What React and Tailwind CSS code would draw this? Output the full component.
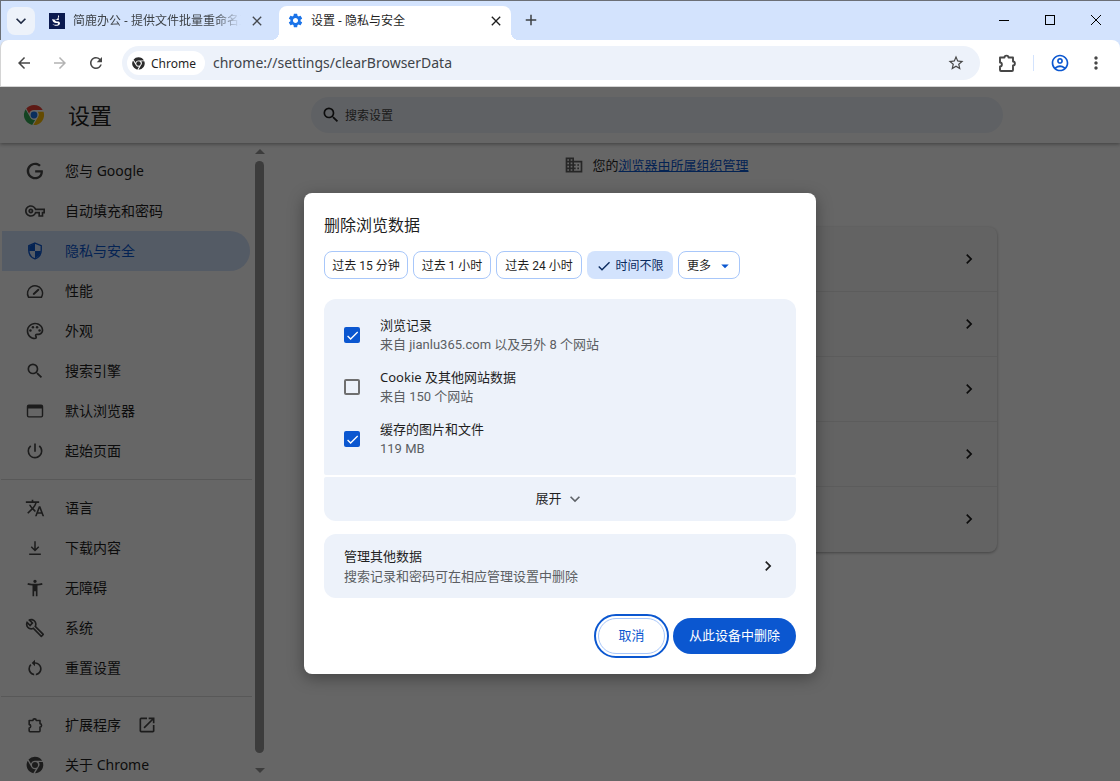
import React from "react";
import {
  MdAdd,
  MdArrowBack,
  MdArrowDropDown,
  MdArrowForward,
  MdCheck,
  MdChevronRight,
  MdClose,
  MdDomain,
  MdKeyboardArrowDown,
  MdMoreVert,
  MdOpenInNew,
  MdOutlineAccountCircle,
  MdOutlineBuild,
  MdOutlinePalette,
  MdOutlineVpnKey,
  MdPowerSettingsNew,
  MdRefresh,
  MdRestartAlt,
  MdSearch,
  MdSettings,
  MdStarBorder,
  MdTranslate,
  MdAccessibilityNew,
} from "react-icons/md";

const GoogleIcon = (props) => (
  <svg viewBox="0 0 24 24" fill="currentColor" {...props}>
    <path d="M21.35 11.1h-9.17v2.73h6.51c-.33 3.81-3.5 5.44-6.5 5.44C8.36 19.27 5 16.25 5 12c0-4.1 3.2-7.27 7.2-7.27 3.09 0 4.9 1.97 4.9 1.97L19 4.72S16.56 2 12.1 2C6.42 2 2.03 6.8 2.03 12c0 5.05 4.13 10 10.22 10 5.35 0 9.25-3.67 9.25-9.09 0-1.15-.15-1.81-.15-1.81z" />
  </svg>
);

const ShieldIcon = (props) => (
  <svg viewBox="0 0 24 24" fill="none" {...props}>
    <path d="M12 2.500l7.500 3v5.600c0 4.800-3.200 8.900-7.500 10.400-4.300-1.500-7.500-5.600-7.500-10.400V5.500z" stroke="currentColor" strokeWidth="1.600" />
    <path d="M12 3v9H5V6zM12 12h7c-.4 4-3.200 7.400-7 8.800z" fill="currentColor" />
  </svg>
);

const GaugeIcon = (props) => (
  <svg viewBox="0 0 24 24" fill="none" stroke="currentColor" strokeWidth="1.800" {...props}>
    <path d="M4.300 19.500a9 9 0 0 1 15.400-9.400 9 9 0 0 1 0 9.400z" strokeLinejoin="round" />
    <path d="M10.500 15.500l5.500-5" strokeLinecap="round" strokeWidth="2.400" />
  </svg>
);

const WindowIcon = (props) => (
  <svg viewBox="0 0 24 24" fill="none" stroke="currentColor" {...props}>
    <rect x="3" y="5" width="18" height="14" rx="1.500" strokeWidth="1.700" />
    <path d="M3 7.500h18" strokeWidth="3" />
  </svg>
);

const DownloadIcon = (props) => (
  <svg viewBox="0 0 24 24" fill="none" stroke="currentColor" strokeWidth="1.800" {...props}>
    <path d="M12 4v11M7.500 10.500L12 15l4.500-4.500M5 19.500h14" />
  </svg>
);

const ExtensionIcon = (props) => (
  <svg viewBox="0 0 24 24" fill="none" stroke="currentColor" strokeWidth="1.900" strokeLinejoin="round" {...props}>
    <path d="M5 6.500h4.500c0-2.500 4-2.500 4 0H18v4c2.500 0 2.500 4 0 4V19a1 1 0 0 1-1 1H6a1 1 0 0 1-1-1v-3.500c2.500 0 2.500-4 0-4z" />
  </svg>
);

// dark centre logo, same drawing for the chip and the sidebar
const ChromeMono = (props) => (
  <svg viewBox="0 0 24 24" fill="currentColor" {...props}>
    <path d="M12 2a10 10 0 0 1 8.660 5H12a5 5 0 0 0-4.800 3.600L4.200 5.400A10 10 0 0 1 12 2z" />
    <path d="M3.300 7l4.400 7.600a5 5 0 0 0 5.300 2.300l-3 5A10 10 0 0 1 3.300 7z" />
    <path d="M21.300 8.500a10 10 0 0 1-9.300 13.500l4.300-7.500a5 5 0 0 0 .1-6z" />
    <circle cx="12" cy="12" r="3.600" />
  </svg>
);

const ChromeColor = (props) => (
  <svg viewBox="0 0 24 24" {...props}>
    <path d="M12 1a11 11 0 0 1 9.530 5.500H12a5.500 5.500 0 0 0-5.300 4L3.600 4.900A11 11 0 0 1 12 1z" fill="#ea4335" />
    <path d="M2.900 5.800l4.800 8.400a5.500 5.500 0 0 0 5.500 3.200L10 22.800A11 11 0 0 1 2.900 5.800z" fill="#34a853" />
    <path d="M22.400 8.500A11 11 0 0 1 11.300 23l4.800-8.300a5.500 5.500 0 0 0 .1-6.200z" fill="#fbbc04" />
    <circle cx="12" cy="12" r="4.600" fill="#fff" />
    <circle cx="12" cy="12" r="3.700" fill="#1a73e8" />
  </svg>
);

const Favicon = () => (
  <svg viewBox="0 0 16 16" className="w-4 h-4 shrink-0">
    <rect width="16" height="16" fill="#0b1a4f" />
    <path d="M9 2c1.500.8 1.500 2.200.2 3 1 .6 1 1.400.3 2-1.500.2-2.700 0-4-.8.300 1.500 1.500 2.300 3.500 2.300 2.300 0 2.800 2.600.7 3.800-2 1-5 .6-6.300-1.300 2 1 4.500 1.200 5.600.2.600-.8-.5-1.300-2-1.300-2 0-3.700-1.500-3.800-4C4.500 6.400 6.700 7 8 6.300 8.800 5.500 9.400 3.800 9 2z" fill="#fff" />
  </svg>
);

const menuTop = [
  { label: "您与 Google", icon: GoogleIcon },
  { label: "自动填充和密码", icon: MdOutlineVpnKey },
  { label: "隐私与安全", icon: ShieldIcon, active: true },
  { label: "性能", icon: GaugeIcon },
  { label: "外观", icon: MdOutlinePalette },
  { label: "搜索引擎", icon: MdSearch },
  { label: "默认浏览器", icon: WindowIcon },
  { label: "起始页面", icon: MdPowerSettingsNew },
];

const menuMiddle = [
  { label: "语言", icon: MdTranslate },
  { label: "下载内容", icon: DownloadIcon },
  { label: "无障碍", icon: MdAccessibilityNew },
  { label: "系统", icon: MdOutlineBuild },
  { label: "重置设置", icon: MdRestartAlt },
];

const ranges = [
  { label: "过去 15 分钟", width: "w-[84px]" },
  { label: "过去 1 小时", width: "w-[78px]" },
  { label: "过去 24 小时", width: "w-[86px]" },
];

const dataRows = [
  { title: "浏览记录", sub: "来自 jianlu365.com 以及另外 8 个网站", checked: true },
  { title: "Cookie 及其他网站数据", sub: "来自 150 个网站", checked: false },
  { title: "缓存的图片和文件", sub: "119 MB", checked: true },
];

const MenuItem = ({ item, children }) => {
  const Icon = item.icon;
  return (
    <div
      className={`ml-[2px] w-[248px] h-10 shrink-0 flex items-center rounded-r-full ${
        item.active ? "bg-[#d3e3fd] text-[#0b57d0]" : "text-[#1f1f1f]"
      }`}
    >
      <Icon className={`w-5 h-5 ml-[23px] shrink-0 ${item.active ? "" : "text-[#474747]"}`} />
      <span className="ml-[20px] text-[14px] leading-5">{item.label}</span>
      {children}
    </div>
  );
};

const Checkbox = ({ checked }) =>
  checked ? (
    <div className="w-4 h-4 rounded-[2px] bg-[#0b57d0] flex items-center justify-center shrink-0">
      <MdCheck className="w-[15px] h-[15px] text-white" />
    </div>
  ) : (
    <div className="w-4 h-4 rounded-[2px] border-2 border-[#6f6f6f] shrink-0" />
  );

const Dialog = () => (
  <div className="w-[512px] h-[481px] bg-white rounded-lg p-5 shadow-[0_4px_16px_rgba(0,0,0,0.35)] text-[#1f1f1f]">
    <div className="text-[16px] leading-6">删除浏览数据</div>

    <div className="flex gap-[5px] mt-[14px]">
      {ranges.map((range) => (
        <div
          key={range.label}
          className={`${range.width} h-7 pt-px flex items-center justify-center border border-[#a8c7fa] rounded-lg text-[12px] whitespace-nowrap font-['Roboto','Noto_Sans_CJK_SC',sans-serif]`}
        >
          {range.label}
        </div>
      ))}
      <div className="h-7 w-[86px] pt-px flex items-center justify-center gap-[3px] bg-[#d3e3fd] rounded-lg text-[12px] text-[#0a2a5e]">
        <MdCheck className="w-4 h-4" />
        时间不限
      </div>
      <div className="h-7 w-[62px] pl-2 pt-px flex items-center border border-[#a8c7fa] rounded-lg text-[12px]">
        更多
        <MdArrowDropDown className="w-[18px] h-[18px] ml-[5px] text-[#0b57d0]" />
      </div>
    </div>

    <div className="mt-5 h-[176px] bg-[#edf2fa] rounded-t-xl rounded-b-[2px] pt-4 pl-5 flex flex-col gap-3">
      {dataRows.map((row) => (
        <div key={row.title} className="flex items-center h-10">
          <Checkbox checked={row.checked} />
          <div className="ml-5">
            <div className="text-[13px] leading-5">{row.title}</div>
            <div className="text-[13px] leading-5 text-[#5b5e62] font-['Roboto','Noto_Sans_CJK_SC',sans-serif]">
              {row.sub}
            </div>
          </div>
        </div>
      ))}
    </div>

    <div className="mt-[2px] h-[44px] bg-[#edf2fa] rounded-b-xl rounded-t-[2px] flex items-center justify-center text-[13px]">
      展开
      <MdKeyboardArrowDown className="w-5 h-5 ml-[3px] text-[#5f6368]" />
    </div>

    <div className="mt-[13px] h-16 bg-[#edf2fa] rounded-xl px-5 flex items-center justify-between">
      <div>
        <div className="text-[13px] leading-5">管理其他数据</div>
        <div className="text-[13px] leading-5 text-[#5b5e62]">搜索记录和密码可在相应管理设置中删除</div>
      </div>
      <MdChevronRight className="w-5 h-5 -mr-[2px]" />
    </div>

    <div className="mt-5 flex justify-end gap-2">
      <div className="w-[67px] h-9 rounded-full border border-[#a8c7fa] outline-2 outline-offset-2 outline-[#0b57d0] flex items-center justify-center text-[13px] text-[#0b57d0]">
        取消
      </div>
      <div className="w-[123px] h-9 rounded-full bg-[#0b57d0] text-white flex items-center justify-center text-[13px]">
        从此设备中删除
      </div>
    </div>
  </div>
);

const TabBar = () => (
  <div className="h-10 pt-[6px] bg-[#d3e3fd] border-t border-l border-[#6b6f76] flex items-start shrink-0">
    <div className="ml-[6px] w-7 h-7 rounded-lg bg-[#edf2fa] flex items-center justify-center shrink-0">
      <MdKeyboardArrowDown className="w-5 h-5 text-[#1f2a44]" />
    </div>
    <div className="ml-[14px] w-[230px] h-7 flex items-center shrink-0">
      <Favicon />
      <span className="ml-2 w-[168px] overflow-hidden whitespace-nowrap text-[12px] text-[#3f4449] [mask-image:linear-gradient(to_right,black_85%,transparent)]">
        简鹿办公 - 提供文件批量重命名工具
      </span>
      <MdClose className="w-4 h-4 ml-2 text-[#45494f]" />
    </div>
    <div className="relative w-[232px] h-[34px] -mt-px bg-white rounded-t-lg flex items-center shrink-0 pb-[5px]">
      <MdSettings className="w-[17px] h-[17px] ml-[8px] text-[#1a73e8]" />
      <span className="ml-[7px] w-[174px] whitespace-nowrap text-[12px] text-[#1f1f1f]">设置 - 隐私与安全</span>
      <MdClose className="w-4 h-4 ml-[3px] text-[#1f1f1f]" />
      <div className="absolute -left-2 bottom-0 w-2 h-2 bg-[radial-gradient(circle_at_0_0,#d3e3fd_8px,white_8px)]" />
      <div className="absolute -right-2 bottom-0 w-2 h-2 bg-[radial-gradient(circle_at_100%_0,#d3e3fd_8px,white_8px)]" />
    </div>
    <MdAdd className="ml-[11px] mt-[4px] w-[18px] h-[18px] text-[#3c4043] shrink-0" />
    <div className="ml-auto flex items-center h-7 shrink-0 -mt-[1px]">
      <div className="w-[46px] flex justify-center">
        <div className="w-[10px] h-px bg-black" />
      </div>
      <div className="w-[46px] flex justify-center">
        <div className="w-[10px] h-[10px] border border-black" />
      </div>
      <div className="w-[46px] flex justify-center">
        <svg viewBox="0 0 12 12" className="w-3 h-3" fill="none" stroke="black" strokeWidth="1">
          <path d="M1 1l10 10M11 1L1 11" />
        </svg>
      </div>
      <div className="w-[1px]" />
    </div>
  </div>
);

const Toolbar = () => (
  <div className="h-[47px] bg-[#d3e3fd] shrink-0">
    <div className="h-[47px] bg-white rounded-t-lg border-l border-b border-[#d4d4d4] flex items-start pt-[6px]">
      <MdArrowBack className="ml-[14px] mt-[8px] w-[18px] h-[18px] text-[#474747] shrink-0" />
      <MdArrowForward className="ml-[18px] mt-[8px] w-[18px] h-[18px] text-[#b3b3b3] shrink-0" />
      <MdRefresh className="ml-[18px] mt-[8px] w-[18px] h-[18px] text-[#474747] shrink-0" />
      <div className="ml-[17px] w-[858px] h-[34px] bg-[#edf2fa] rounded-full flex items-center shrink-0">
        <div className="ml-[5px] w-[78px] h-6 rounded-full bg-white flex items-center">
          <ChromeMono className="ml-[4px] w-[15px] h-[15px] text-[#2b2b2b]" />
          <span className="ml-[5px] pt-px text-[12px] text-[#1f1f1f]">Chrome</span>
        </div>
        <span className="ml-2 -mt-px text-[14px] text-[#3f4449] whitespace-nowrap">chrome://settings/clearBrowserData</span>
        <MdStarBorder className="ml-auto mr-[15px] w-[18px] h-[18px] text-[#474747]" />
      </div>
      <ExtensionIcon className="ml-[15px] mt-[5px] w-6 h-6 text-[#474747] shrink-0" />
      <div className="ml-[14px] mt-[9px] w-px h-4 bg-[#d3e3fd] shrink-0" />
      <MdOutlineAccountCircle className="ml-[16px] mt-[7px] w-5 h-5 text-[#0b57d0] shrink-0" />
      <MdMoreVert className="ml-[16px] mt-[7px] w-5 h-5 text-[#474747] shrink-0" />
    </div>
  </div>
);

const SettingsPage = () => (
  <div className="flex-1 min-h-0 flex flex-col bg-white overflow-hidden">
    <div className="h-14 shrink-0 flex items-center shadow-[0_1px_4px_rgba(0,0,0,0.4)] relative">
      <ChromeColor className="ml-[23px] w-[22px] h-[22px]" />
      <span className="ml-[23px] text-[22px] text-[#1f1f1f] w-[243px]">设置</span>
      <div className="w-[692px] h-9 rounded-full bg-[#edf2fa] flex items-center">
        <MdSearch className="ml-[10px] w-5 h-5 text-[#1f1f1f]" />
        <span className="ml-[4px] pt-[2px] text-[12px] text-[#474747]">搜索设置</span>
      </div>
    </div>

    <div className="flex-1 min-h-0 flex">
      <div className="w-[255px] shrink-0 pt-2 overflow-hidden flex flex-col">
        {menuTop.map((item) => (
          <MenuItem key={item.label} item={item} />
        ))}
        <div className="my-2 h-px bg-[#dcdcdc] shrink-0 ml-[1px] mr-[3px]" />
        {menuMiddle.map((item) => (
          <MenuItem key={item.label} item={item} />
        ))}
        <div className="my-2 h-px bg-[#dcdcdc] shrink-0 ml-[1px] mr-[3px]" />
        <MenuItem item={{ label: "扩展程序", icon: ExtensionIcon }}>
          <MdOpenInNew className="ml-[16px] w-5 h-5 text-[#474747]" />
        </MenuItem>
        <MenuItem item={{ label: "关于 Chrome", icon: ChromeMono }} />
      </div>

      <div className="w-[9px] shrink-0 flex flex-col items-center pt-[6px] pb-[8px]">
        <div className="w-0 h-0 border-x-[5px] border-x-transparent border-b-[5px] border-b-[#969696]" />
        <div className="w-[9px] flex-1 mt-[7px] mb-[15px] rounded-full bg-[#969696]" />
        <div className="w-0 h-0 border-x-[5px] border-x-transparent border-t-[5px] border-t-[#969696]" />
      </div>

      <div className="ml-[52px] w-[681px] shrink-0 pt-3">
        <div className="flex items-center justify-center h-5 text-[13px] text-[#1f1f1f]">
          <MdDomain className="w-5 h-5 mr-2 text-[#5f5f5f]" />
          <span className="pt-[2px]">
            您的<span className="underline text-[#0b57d0]">浏览器由所属组织管理</span>
          </span>
        </div>
        <div className="mt-[52px] rounded-lg bg-[#f8f8f8] shadow-[0_1px_3px_rgba(0,0,0,0.35)]">
          {[0, 1, 2, 3, 4].map((row) => (
            <div
              key={row}
              className={`h-[65px] flex items-center justify-end pr-[18px] pb-px ${row < 4 ? "border-b border-[#e6e6e6]" : ""}`}
            >
              <MdChevronRight className="w-5 h-5 text-[#1f1f1f]" />
            </div>
          ))}
        </div>
      </div>
    </div>
  </div>
);

export default function App() {
  return (
    <div className="w-[1120px] h-[781px] overflow-hidden flex flex-col font-['Noto_Sans','Noto_Sans_CJK_SC',sans-serif]">
      <TabBar />
      <Toolbar />
      <div className="relative flex-1 min-h-0 flex flex-col">
        <SettingsPage />
        {/* dialog scrim */}
        <div className="absolute inset-0 pb-px bg-black/60 flex items-center justify-center">
          <Dialog />
        </div>
      </div>
    </div>
  );
}
